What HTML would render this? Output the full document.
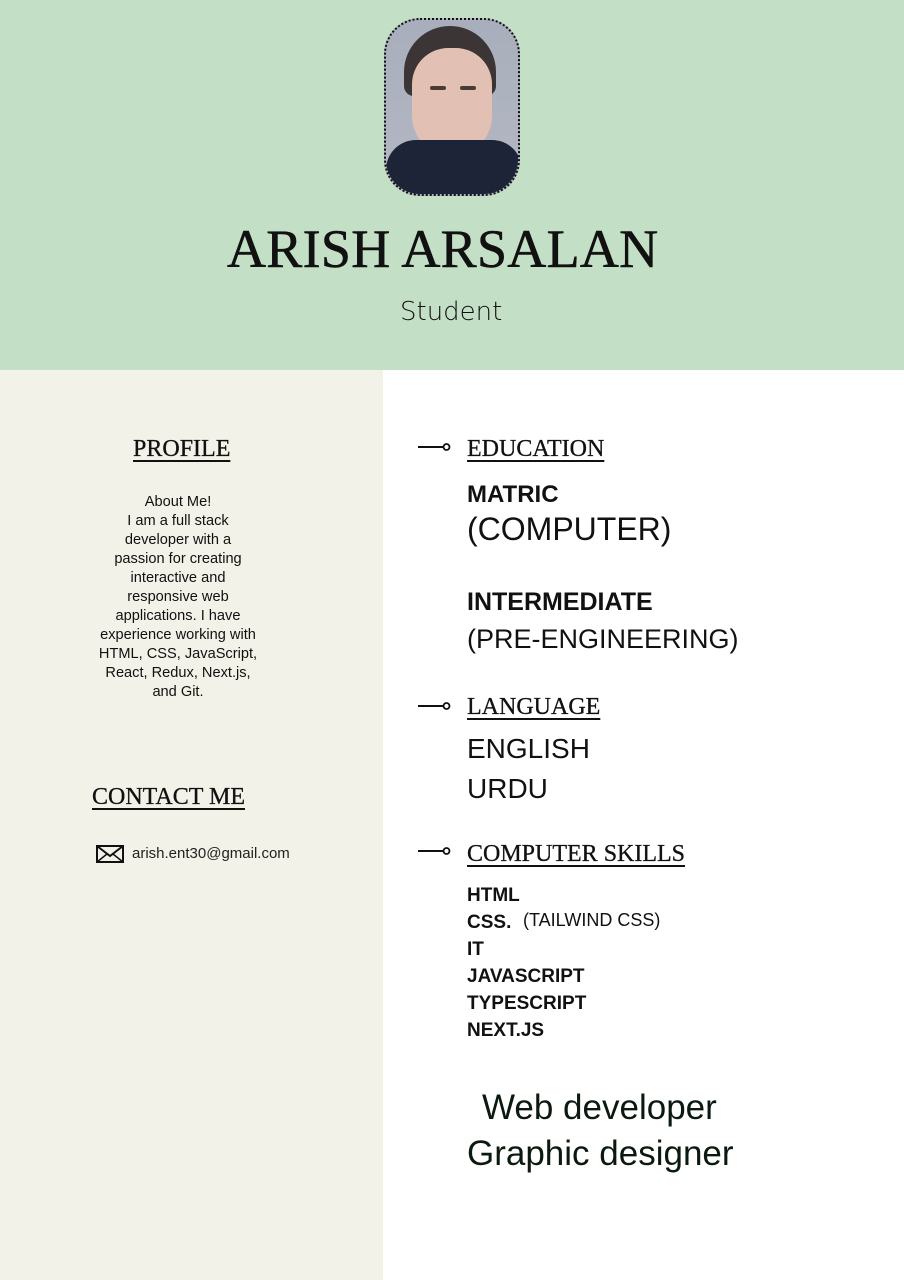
<!DOCTYPE html>
<html><head><meta charset="utf-8"><style>
*{margin:0;padding:0;box-sizing:border-box}
body{width:904px;height:1280px;position:relative;background:#fff;font-family:"Liberation Sans",sans-serif;color:#111;overflow:hidden}
.hdr{position:absolute;left:0;top:0;width:904px;height:370px;background:#c3e0c7}
.left{position:absolute;left:0;top:370px;width:383px;height:910px;background:#f2f2e8}
.a{position:absolute;white-space:nowrap}
.serif{font-family:"Liberation Serif",serif}
.h{font-family:"Liberation Serif",serif;font-size:24px;text-decoration:underline;text-underline-offset:4px;text-decoration-thickness:1.5px;-webkit-text-stroke:0.3px #111}
.photo{position:absolute;left:384px;top:18px;width:136px;height:178px;border-radius:36px;border:2.5px dotted #111;overflow:hidden;
background:linear-gradient(#a8aebb,#b4b8c4)}
.conn{position:absolute;width:33px;height:10px}
.b{font-weight:bold}
</style></head><body>
<div class="hdr"></div>
<div class="left"></div>
<div class="photo">
 <div style="position:absolute;left:18px;top:6px;width:92px;height:70px;border-radius:46px 46px 10px 10px;background:#3b3535"></div>
 <div style="position:absolute;left:26px;top:28px;width:80px;height:108px;border-radius:40px 40px 44px 44px;background:#e2c1b4"></div>
 <div style="position:absolute;left:44px;top:66px;width:16px;height:4px;background:#4a3a35;border-radius:2px"></div>
 <div style="position:absolute;left:74px;top:66px;width:16px;height:4px;background:#4a3a35;border-radius:2px"></div>
 <div style="position:absolute;left:0;top:120px;width:136px;height:60px;border-radius:30px 30px 0 0;background:#1e2438"></div>
</div>
<div class="a serif" style="left:227px;top:218px;font-size:54px;letter-spacing:0.3px;-webkit-text-stroke:0.6px #111">ARISH ARSALAN</div>
<div class="a" style="left:400px;top:297px;font-size:26px;font-family:'DejaVu Sans',sans-serif;font-weight:300;letter-spacing:0px">Student</div>

<div class="a h" style="left:133px;top:436px">PROFILE</div>
<div class="a" style="left:78px;width:200px;top:493px;font-size:14.6px;line-height:19px;text-align:center">About Me!<br>I am a full stack<br>developer with a<br>passion for creating<br>interactive and<br>responsive web<br>applications. I have<br>experience working with<br>HTML, CSS, JavaScript,<br>React, Redux, Next.js,<br>and Git.</div>
<div class="a h" style="left:92px;top:784px">CONTACT ME</div>
<svg class="a" style="left:96px;top:845px" width="28" height="18" viewBox="0 0 28 18"><rect x="1" y="1" width="26" height="16" fill="none" stroke="#111" stroke-width="2"/><path d="M1 1 L14 11 L27 1" fill="none" stroke="#111" stroke-width="2"/><path d="M1 17 L11 9 M27 17 L17 9" stroke="#111" stroke-width="1.5"/></svg>
<div class="a" style="left:132px;top:845px;font-size:15px;color:#222">arish.ent30@gmail.com</div>

<svg class="conn" style="left:418px;top:442px" viewBox="0 0 33 10"><line x1="0" y1="5" x2="25" y2="5" stroke="#111" stroke-width="2"/><circle cx="28.5" cy="5" r="3" fill="none" stroke="#111" stroke-width="1.8"/></svg>
<div class="a h" style="left:467px;top:436px">EDUCATION</div>
<div class="a b" style="left:467px;top:481px;font-size:24px">MATRIC</div>
<div class="a" style="left:467px;top:511px;font-size:32px">(COMPUTER)</div>
<div class="a b" style="left:467px;top:588px;font-size:25px">INTERMEDIATE</div>
<div class="a" style="left:467px;top:624px;font-size:27px">(PRE-ENGINEERING)</div>

<svg class="conn" style="left:418px;top:701px" viewBox="0 0 33 10"><line x1="0" y1="5" x2="25" y2="5" stroke="#111" stroke-width="2"/><circle cx="28.5" cy="5" r="3" fill="none" stroke="#111" stroke-width="1.8"/></svg>
<div class="a h" style="left:467px;top:694px">LANGUAGE</div>
<div class="a" style="left:467px;top:733px;font-size:28px">ENGLISH</div>
<div class="a" style="left:467px;top:773px;font-size:28px">URDU</div>

<svg class="conn" style="left:418px;top:846px" viewBox="0 0 33 10"><line x1="0" y1="5" x2="25" y2="5" stroke="#111" stroke-width="2"/><circle cx="28.5" cy="5" r="3" fill="none" stroke="#111" stroke-width="1.8"/></svg>
<div class="a h" style="left:467px;top:841px">COMPUTER SKILLS</div>
<div class="a b" style="left:467px;top:885px;font-size:19px">HTML</div>
<div class="a b" style="left:467px;top:912px;font-size:19px">CSS.</div>
<div class="a" style="left:523px;top:910px;font-size:18px">(TAILWIND CSS)</div>
<div class="a b" style="left:467px;top:939px;font-size:19px">IT</div>
<div class="a b" style="left:467px;top:966px;font-size:19px">JAVASCRIPT</div>
<div class="a b" style="left:467px;top:993px;font-size:19px">TYPESCRIPT</div>
<div class="a b" style="left:467px;top:1020px;font-size:19px">NEXT.JS</div>

<div class="a" style="left:482px;top:1088px;font-size:35px;color:#0b1a0e">Web developer</div>
<div class="a" style="left:467px;top:1134px;font-size:35px;color:#0b1a0e">Graphic designer</div>
</body></html>
